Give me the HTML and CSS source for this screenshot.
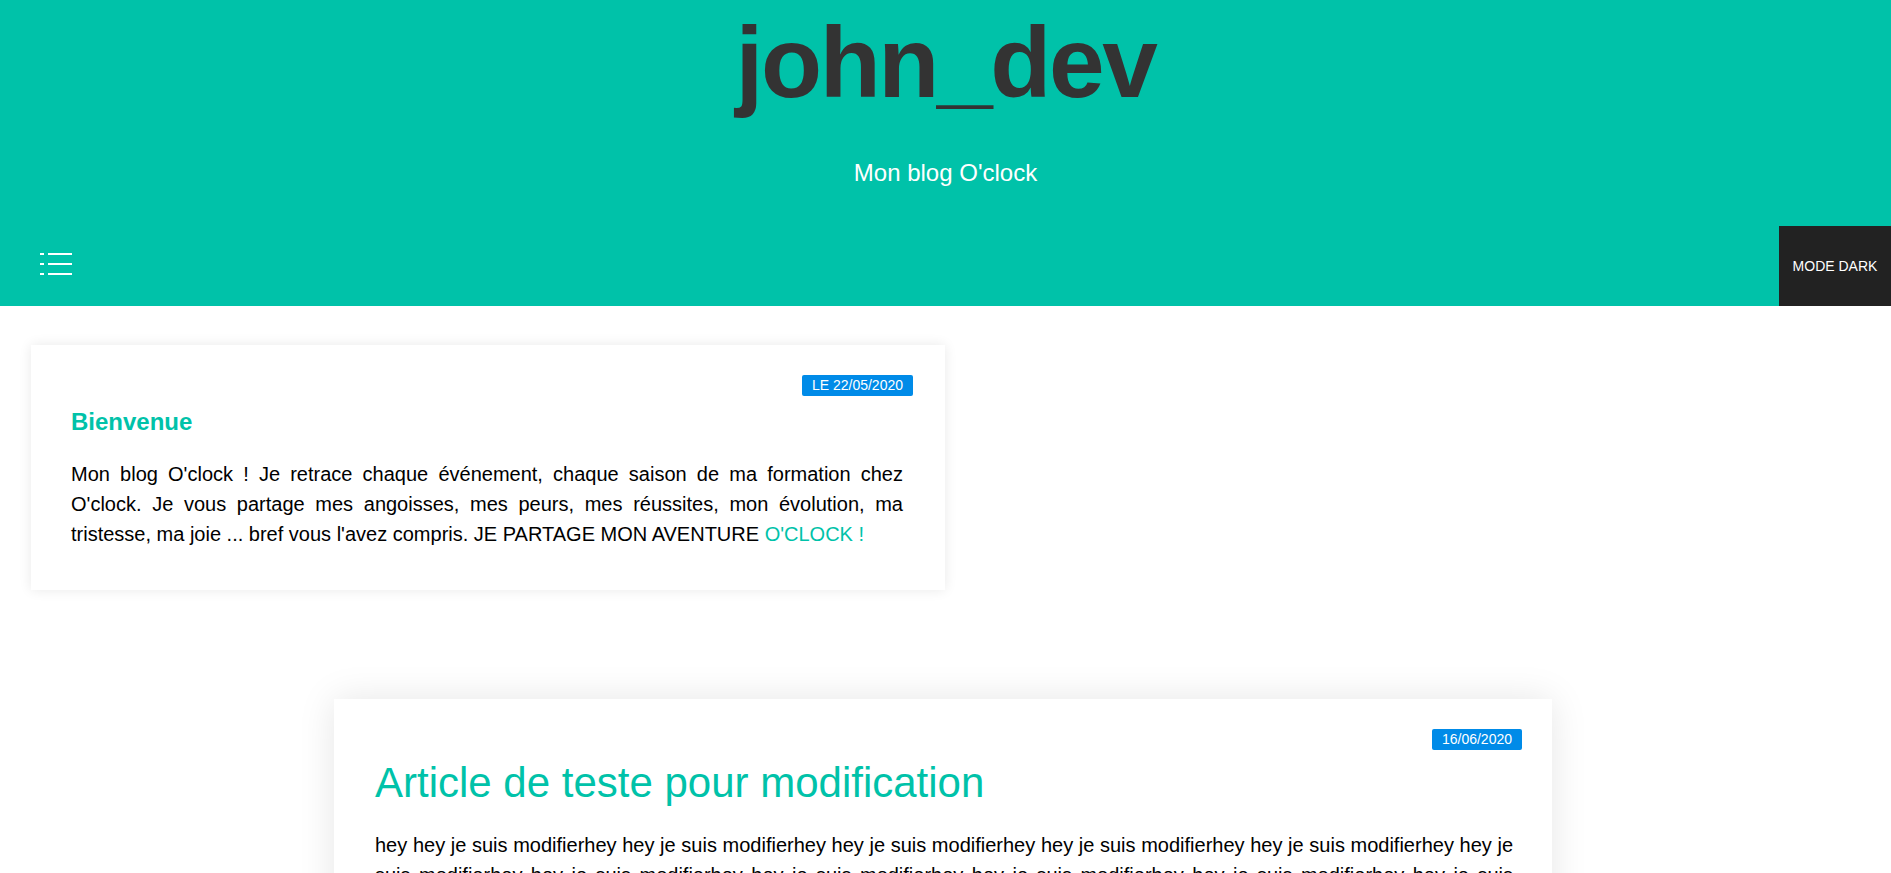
FILE: index.html
```html
<!DOCTYPE html>
<html lang="fr">
<head>
<meta charset="utf-8">
<title>john_dev</title>
<link rel="stylesheet" href="styles.css">
</head>
<body>
<header class="header">
  <h1 class="site-title">john_dev</h1>
  <p class="site-subtitle">Mon blog O'clock</p>
  <nav class="nav">
    <button class="menu-btn" aria-label="menu">
      <svg width="32" height="22" viewBox="0 0 32 22">
        <rect x="0" y="0" width="4" height="2" fill="#fff"/>
        <rect x="8" y="0" width="24" height="2" fill="#fff"/>
        <rect x="0" y="10" width="4" height="2" fill="#fff"/>
        <rect x="8" y="10" width="24" height="2" fill="#fff"/>
        <rect x="0" y="20" width="4" height="2" fill="#fff"/>
        <rect x="8" y="20" width="24" height="2" fill="#fff"/>
      </svg>
    </button>
    <button class="dark-btn">MODE DARK</button>
  </nav>
</header>
<main class="main">
  <article class="card card-small">
    <div class="card-top"><span class="badge">LE 22/05/2020</span></div>
    <h2 class="card-title">Bienvenue</h2>
    <p class="card-text">Mon blog O'clock ! Je retrace chaque événement, chaque saison de ma formation chez O'clock. Je vous partage mes angoisses, mes peurs, mes réussites, mon évolution, ma tristesse, ma joie ... bref vous l'avez compris. JE PARTAGE MON AVENTURE <span class="accent">O'CLOCK !</span></p>
  </article>
  <article class="card card-large">
    <div class="card-top"><span class="badge">16/06/2020</span></div>
    <h2 class="card-title-big">Article de teste pour modification</h2>
    <p class="card-text">hey hey je suis modifierhey hey je suis modifierhey hey je suis modifierhey hey je suis modifierhey hey je suis modifierhey hey je suis modifierhey hey je suis modifierhey hey je suis modifierhey hey je suis modifierhey hey je suis modifierhey hey je suis modifierhey hey je suis modifierhey hey je suis modifierhey hey je suis modifierhey hey je suis modifierhey hey je suis modifierhey hey je suis modifierhey hey je suis modifierhey hey je suis modifier</p>
  </article>
</main>
</body>
</html>
```
FILE: styles.css
```css
* { box-sizing: border-box; }
html, body { margin: 0; padding: 0; }
body {
  font-family: "Liberation Sans", Arial, sans-serif;
  background: #fff;
  color: #000;
}
.header {
  background: #00c2a9;
  padding-top: 6px;
  text-align: center;
}
.site-title {
  margin: 0;
  font-family: "Liberation Sans", Arial, sans-serif;
  font-size: 100px;
  line-height: 112px;
  letter-spacing: -2.4px;
  font-weight: 700;
  color: #333;
}
.site-subtitle {
  margin: 41px 0 0;
  font-size: 24px;
  line-height: 28px;
  color: #fff;
}
.nav {
  margin-top: 39px;
  height: 80px;
  display: flex;
  justify-content: space-between;
  align-items: stretch;
}
.menu-btn {
  background: none;
  border: 0;
  padding: 0 0 0 40px;
  margin: 0;
  display: flex;
  align-items: center;
  cursor: pointer;
}
.menu-btn svg { display: block; margin-bottom: 4px; }
.dark-btn {
  background: #222;
  color: #fff;
  border: 0;
  margin: 0;
  width: 112px;
  font-family: "Liberation Sans", Arial, sans-serif;
  font-size: 14px;
  padding: 0;
  cursor: pointer;
}
.main {
  padding: 39px 0 0 31px;
  display: flex;
  flex-direction: column;
}
.card {
  background: #fff;
  padding: 30px 42px 41px 40px;
}
.card-small {
  width: 914px;
  box-shadow: 0 0 12px rgba(0, 0, 0, 0.09);
}
.card-large {
  width: 1218px;
  margin-top: 109px;
  margin-left: 303px;
  padding-left: 41px;
  padding-right: 39px;
  box-shadow: 0 0 35px rgba(0, 0, 0, 0.1);
}
.card-top {
  display: flex;
  justify-content: flex-end;
  margin-right: -10px;
}
.card-large .card-top { margin-right: -9px; }
.badge {
  background: #008be8;
  color: #fff;
  font-size: 14px;
  line-height: 21px;
  height: 21px;
  padding: 0 10px;
  border-radius: 2px;
}
.card-title {
  margin: 12px 0 0;
  font-size: 24px;
  line-height: 28px;
  font-weight: 700;
  color: #00c2a9;
}
.card-title-big {
  margin: 9px 0 0;
  font-size: 42px;
  line-height: 48px;
  font-weight: 400;
  color: #00c2a9;
}
.card-text {
  margin: 23px 0 0;
  font-size: 20px;
  line-height: 30px;
  text-align: justify;
}
.accent { color: #00c2a9; }
```
